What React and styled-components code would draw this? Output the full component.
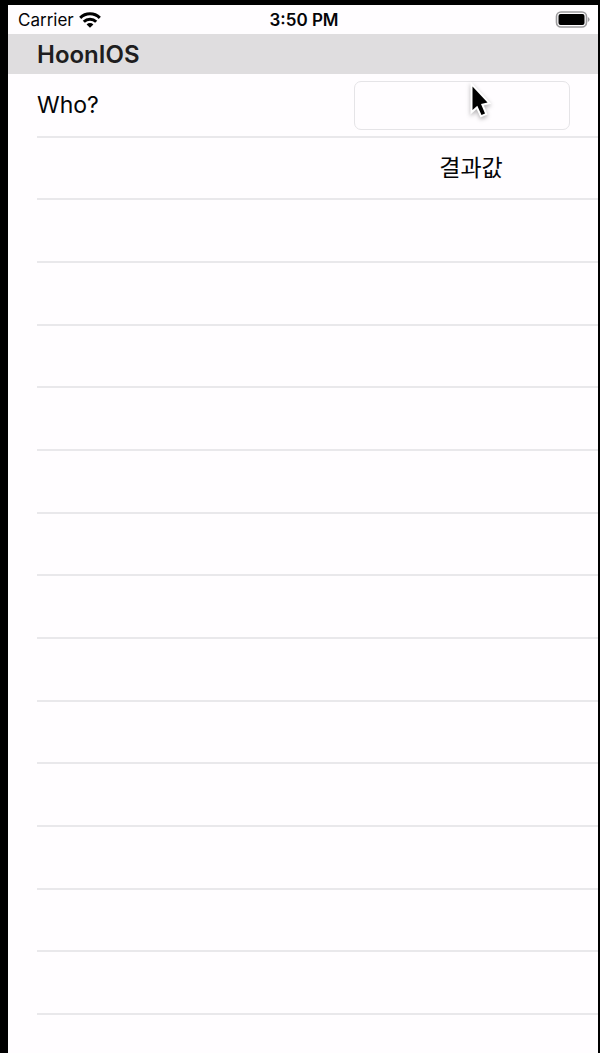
import React, { useState } from "react";
import styled, { createGlobalStyle } from "styled-components";

const GlobalStyle = createGlobalStyle`
  * {
    box-sizing: border-box;
  }
  body {
    margin: 0;
    background: #000;
    color: #050507;
    font-family: Inter, "Noto Sans CJK KR", sans-serif;
  }
`;

const Screen = styled.div`
  position: relative;
  display: flex;
  flex-direction: column;
  min-height: 100vh;
  border: solid #000;
  border-width: 5px 2px 0 8px;
  background: #fffdff;
`;

const StatusBar = styled.div`
  display: grid;
  grid-template-columns: 1fr auto 1fr;
  align-items: center;
  height: 29px;
  padding: 0 8px 0 10px;
  font-size: 17px;
  line-height: 20px;
`;

const Carrier = styled.div`
  display: flex;
  align-items: center;
  gap: 5px;
`;

const Time = styled.div`
  font-weight: 600;
`;

const Battery = styled.svg`
  justify-self: end;
`;

const SectionHeader = styled.h1`
  height: 40px;
  margin: 0;
  padding: 0 29px;
  background: #dfdddf;
  color: #1e1d20;
  font-size: 24px;
  font-weight: 600;
  line-height: 42px;
`;

const List = styled.ul`
  display: flex;
  flex: 1;
  flex-direction: column;
  margin: 0;
  padding: 1px 0 38px 29px;
  list-style: none;
`;

const Row = styled.li`
  display: flex;
  flex: 1 1 0;
  align-items: center;
  justify-content: ${(props) => (props.$end ? "flex-end" : "space-between")};
  padding-right: ${(props) => (props.$inset ? "28px" : "0")};
  border-bottom: 2px solid #e9e8eb;
  font-size: 23px;
  line-height: 28px;
`;

const NameInput = styled.input`
  width: 216px;
  height: 49px;
  padding: 0 12px;
  border: 1px solid #e5e4e7;
  border-radius: 7px;
  background: #fffdff;
  color: inherit;
  font: inherit;
  outline: none;
`;

const Result = styled.output`
  width: 254px;
  text-align: center;
`;

const Pointer = styled.svg`
  position: absolute;
  top: 71px;
  left: 452px;
  filter: drop-shadow(0 2px 2px rgba(0, 0, 0, 0.3));
  pointer-events: none;
`;

const emptyRows = Array.from({ length: 13 }, (_, i) => i);

const arrow = "M12.5 10.5v23.5l4.8-4.3 4.2 9.3 3.5-1.5-4-9.5 6.5-1.5z";

const WifiIcon = () => (
  <svg width="22" height="16" viewBox="0 0 22 16" aria-hidden="true">
    <g fill="none" stroke="#000" strokeWidth="3">
      <path d="M1.2 5.9a13.9 13.9 0 0 1 19.6 0" />
      <path d="M4.8 9.8a8.8 8.8 0 0 1 12.4 0" />
    </g>
    <path d="M11 15.8 7.6 12.4a4.8 4.8 0 0 1 6.8 0z" />
  </svg>
);

const BatteryIcon = () => (
  <Battery width="35" height="17" viewBox="0 0 35 17" aria-hidden="true">
    <rect
      x="1.5"
      y="1"
      width="30"
      height="15"
      rx="4.5"
      fill="none"
      stroke="#9c9b9d"
      strokeWidth="1.6"
    />
    <rect x="3.5" y="3" width="26" height="11" rx="2" />
    <path d="M32.8 6v5q1.8-.7 1.8-2.5t-1.8-2.5" fill="#9c9b9d" />
  </Battery>
);

export default function App() {
  const [name, setName] = useState("");

  return (
    <>
      <GlobalStyle />
      <Screen>
        <StatusBar>
          <Carrier>
            Carrier
            <WifiIcon />
          </Carrier>
          <Time>3:50 PM</Time>
          <BatteryIcon />
        </StatusBar>
        <SectionHeader>HoonIOS</SectionHeader>
        <List>
          <Row $inset>
            <label htmlFor="name">Who?</label>
            <NameInput
              id="name"
              type="text"
              value={name}
              onChange={(e) => setName(e.target.value)}
            />
          </Row>
          <Row $end>
            <Result htmlFor="name">결과값</Result>
          </Row>
          {emptyRows.map((i) => (
            <Row key={i} />
          ))}
        </List>
        <Pointer width="34" height="44" viewBox="0 0 34 44" aria-hidden="true">
          <path d={arrow} fill="#fff" stroke="#fff" strokeWidth="4" />
          <path d={arrow} />
        </Pointer>
      </Screen>
    </>
  );
}
